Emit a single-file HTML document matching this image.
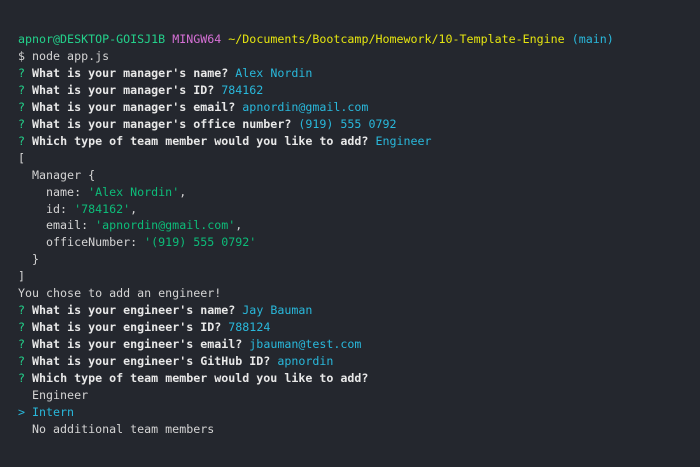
<!DOCTYPE html>
<html><head><style>
html,body{margin:0;padding:0;background:#24272e;width:700px;height:467px;overflow:hidden}
pre{margin:0;position:absolute;left:18px;top:31px;font-family:"DejaVu Sans Mono","Liberation Mono",monospace;font-size:11.65px;line-height:16.95px;color:#d4d4d4;white-space:pre}
.g{color:#23d18b}.m{color:#d670d6}.y{color:#e5e510}.c{color:#29b8db}.b{font-weight:bold;color:#e8e8e8}.s{color:#0dbc79}
</style></head><body>
<pre><span class="g">apnor@DESKTOP-GOISJ1B</span> <span class="m">MINGW64</span> <span class="y">~/Documents/Bootcamp/Homework/10-Template-Engine</span> <span class="c">(main)</span>
$ node app.js
<span class="g">?</span> <span class="b">What is your manager's name?</span> <span class="c">Alex Nordin</span>
<span class="g">?</span> <span class="b">What is your manager's ID?</span> <span class="c">784162</span>
<span class="g">?</span> <span class="b">What is your manager's email?</span> <span class="c">apnordin@gmail.com</span>
<span class="g">?</span> <span class="b">What is your manager's office number?</span> <span class="c">(919) 555 0792</span>
<span class="g">?</span> <span class="b">Which type of team member would you like to add?</span> <span class="c">Engineer</span>
[
  Manager {
    name: <span class="s">'Alex Nordin'</span>,
    id: <span class="s">'784162'</span>,
    email: <span class="s">'apnordin@gmail.com'</span>,
    officeNumber: <span class="s">'(919) 555 0792'</span>
  }
]
You chose to add an engineer!
<span class="g">?</span> <span class="b">What is your engineer's name?</span> <span class="c">Jay Bauman</span>
<span class="g">?</span> <span class="b">What is your engineer's ID?</span> <span class="c">788124</span>
<span class="g">?</span> <span class="b">What is your engineer's email?</span> <span class="c">jbauman@test.com</span>
<span class="g">?</span> <span class="b">What is your engineer's GitHub ID?</span> <span class="c">apnordin</span>
<span class="g">?</span> <span class="b">Which type of team member would you like to add?</span>
  Engineer
<span class="c">&gt; Intern</span>
  No additional team members</pre>
</body></html>
